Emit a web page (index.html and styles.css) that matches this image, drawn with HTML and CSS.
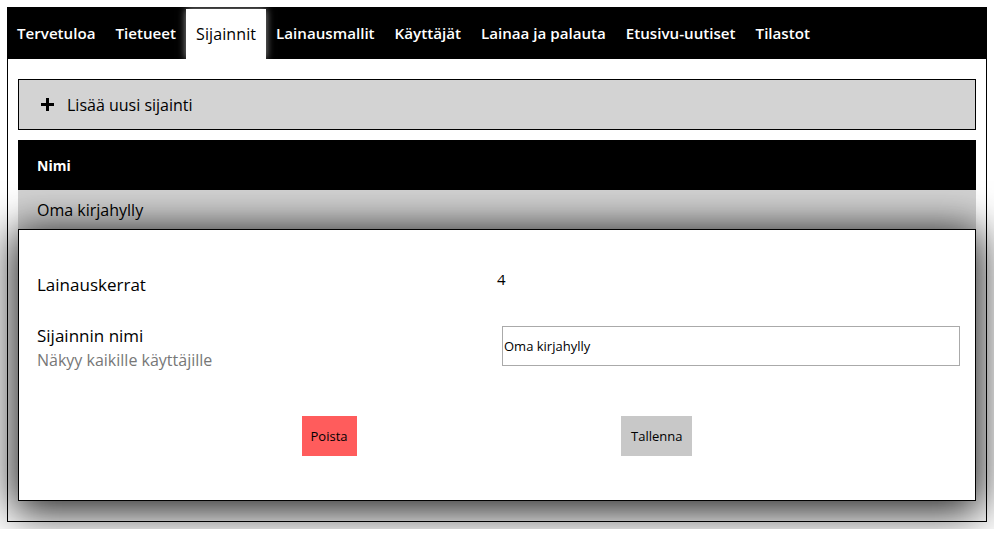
FILE: index.html
```html
<!DOCTYPE html>
<html lang="fi">
<head>
<meta charset="utf-8">
<title>Sijainnit</title>
<link rel="stylesheet" href="styles.css">
</head>
<body>
<div class="app">
  <nav class="nav">
    <a class="nav-item">Tervetuloa</a>
    <a class="nav-item">Tietueet</a>
    <a class="nav-item active">Sijainnit</a>
    <a class="nav-item">Lainausmallit</a>
    <a class="nav-item">Käyttäjät</a>
    <a class="nav-item">Lainaa ja palauta</a>
    <a class="nav-item">Etusivu-uutiset</a>
    <a class="nav-item">Tilastot</a>
  </nav>
  <main class="content">
    <div class="add-btn">
      <svg class="plus" width="13" height="13" viewBox="0 0 13 13"><rect x="0" y="5" width="13" height="3" fill="#000"/><rect x="5" y="0" width="3" height="13" fill="#000"/></svg>
      <span>Lisää uusi sijainti</span>
    </div>
    <div class="table">
      <div class="thead">Nimi</div>
      <div class="row">Oma kirjahylly</div>
      <div class="detail">
        <div class="field field-count">
          <div class="label">Lainauskerrat</div>
          <div class="value">4</div>
        </div>
        <div class="field field-name">
          <div class="label">Sijainnin nimi<div class="hint">Näkyy kaikille käyttäjille</div></div>
          <div class="value"><input class="text-input" type="text" value="Oma kirjahylly"></div>
        </div>
        <div class="actions">
          <button class="btn btn-delete">Poista</button>
          <button class="btn btn-save">Tallenna</button>
        </div>
      </div>
    </div>
  </main>
</div>
</body>
</html>
```

FILE: styles.css
```css
html, body {
  margin: 0;
  padding: 0;
  background: #fff;
}
body {
  padding: 7px;
  font-family: "Open Sans", "Noto Sans", sans-serif;
  color: #000;
}
.app {
  width: 980px;
}
.nav {
  background: #000;
  height: 52px;
  display: flex;
  align-items: flex-end;
}
.nav-item {
  color: #fff;
  font-size: 15.15px;
  font-weight: 600;
  padding: 0 10px;
  height: 50px;
  line-height: 48px;
}
.nav-item.active {
  background: #fff;
  color: #000;
  font-size: 16px;
  font-weight: 400;
  padding: 0 10px;
  line-height: 50px;
  letter-spacing: 0.1px;
  box-shadow: 0 0 8px rgba(255,255,255,0.6);
}
.content {
  border: 1px solid #000;
  border-top: none;
  padding: 20px 10px 20px 10px;
  background: #fff;
}
.add-btn {
  background: #d3d3d3;
  border: 1px solid #000;
  height: 49px;
  display: flex;
  align-items: center;
  padding-left: 22px;
  font-size: 16px;
  gap: 13px;
}
.plus { display: block; }
.table {
  margin-top: 10px;
}
.thead {
  background: #000;
  color: #fff;
  font-weight: 700;
  font-size: 14px;
  height: 50px;
  line-height: 51px;
  padding-left: 19px;
}
.row {
  background: #d3d3d3;
  height: 39px;
  line-height: 40px;
  padding-left: 19px;
  font-size: 16px;
}
.detail {
  position: relative;
  background: #fff;
  border: 1px solid #000;
  box-shadow: 0 6px 40px 5px rgba(0,0,0,0.88);
  height: 270px;
  padding: 0 18px;
}
.field {
  display: grid;
  grid-template-columns: 460px 1fr;
  align-items: start;
}
.label {
  font-size: 17px;
  line-height: 22px;
}
.hint {
  color: #777;
  font-size: 16px;
  line-height: 22px;
  margin-top: 2px;
}
.value {
  font-size: 15px;
  line-height: 22px;
}
.field-count {
  margin-top: 44px;
}
.field-count .value {
  margin-top: -6px;
}
.field-name {
  margin-top: 29px;
}
.text-input {
  display: block;
  box-sizing: border-box;
  width: 458px;
  height: 40px;
  margin: 1px 0 0 5px;
  border: 1px solid #aaa;
  padding: 0 1px;
  font-family: "Open Sans", sans-serif;
  font-size: 13px;
  color: #000;
  outline: none;
}
.actions {
  display: flex;
  justify-content: space-evenly;
  margin-top: 45px;
}
.btn {
  border: none;
  height: 40px;
  padding: 0 10px;
  font-family: "Open Sans", sans-serif;
  font-size: 13px;
  color: #000;
}
.btn-delete { background: #ff5c5c; padding: 0 9px; }
.btn-save { background: #c8c8c8; }
```
